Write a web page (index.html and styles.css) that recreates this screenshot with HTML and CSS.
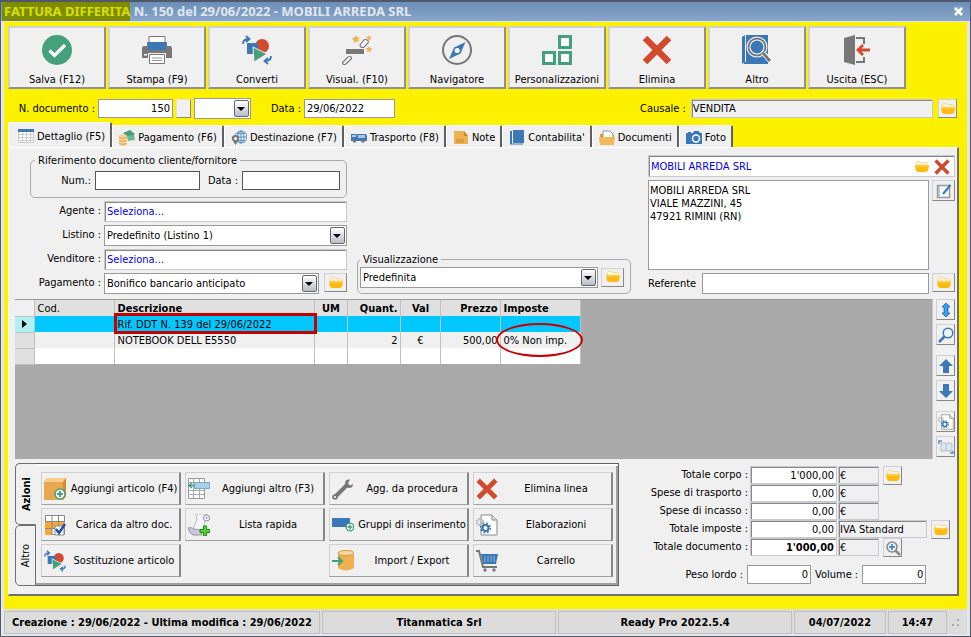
FILE: index.html
```html
<!DOCTYPE html>
<html lang="it">
<head>
    <meta charset="UTF-8">
    <meta name="viewport" content="width=device-width, initial-scale=1.0">
    <title>Fattura differita N. 150</title>
    <link rel="stylesheet" href="styles.css">
</head>
<body>
    <!-- Icone condivise -->
    <svg class="sprite" aria-hidden="true">
        <symbol id="folder" viewBox="0 0 16 14">
            <path d="M2.500 2.500q0-1 1-1H6l1 1h5.500q1 0 1 1V7h-11z" fill="#fff6dc" stroke="#fbd88a" stroke-width="1"/>
            <path d="M1 5h14l-.6 4q-.2 3-3.400 3H5q-3.200 0-3.400-3z" fill="#ffb90f"/>
            <path d="M1 5h14l-.3 2H1.300z" fill="#ffcb3c"/>
        </symbol>
        <symbol id="cross" viewBox="0 0 30 30">
            <path d="M3 3l24 24M27 3L3 27" stroke="#d24a2e" stroke-width="6.500" fill="none"/>
        </symbol>
        <symbol id="convert" viewBox="0 0 30 30">
            <circle cx="20" cy="11" r="7" fill="#d24a2e"/>
            <path d="M5 8h11v11H5z" fill="#3c78b8"/>
            <path d="M11 12l14 7-13 8z" fill="#45a07c" stroke="#f0f0f0" stroke-width="1"/>
            <path d="M1 9q0-5 6-5M4 1l3.500 3L4 7" fill="none" stroke="#3c78b8" stroke-width="1.800"/>
            <path d="M29 21q0 5-6 5M26 23l-3.500 3 3.500 3" fill="none" stroke="#3c78b8" stroke-width="1.800"/>
        </symbol>
        <symbol id="arrow-up" viewBox="0 0 16 16">
            <path d="M8 1l7 7h-4v7H5V8H1z" fill="#3c78b8"/>
        </symbol>
        <symbol id="gear-page" viewBox="0 0 22 22">
            <path d="M5 1h11l5 5v15H5z" fill="#fff" stroke="#888" stroke-width="1"/>
            <path d="M16 1v5h5" fill="#ddd" stroke="#888"/>
            <circle cx="4" cy="8" r="3" fill="none" stroke="#bbb" stroke-width="2.500" stroke-dasharray="1.600 .8"/>
            <circle cx="9.500" cy="14" r="3" fill="none" stroke="#3c78b8" stroke-width="2"/>
            <circle cx="9.500" cy="14" r="4.700" fill="none" stroke="#3c78b8" stroke-width="1.600" stroke-dasharray="1.850 1.850"/>
        </symbol>
    </svg>

    <div class="titlebar">
        <h1><mark>FATTURA DIFFERITA</mark> N. 150 del 29/06/2022 - MOBILI ARREDA SRL</h1>
        <button class="close" type="button" aria-label="Chiudi">
            <svg width="11" height="11" viewBox="0 0 11 11"><path d="M2 2l7 7M9 2l-7 7" stroke="#fff" stroke-width="2.500"/></svg>
        </button>
    </div>

    <form class="document">
        <div class="toolbar">
            <button type="button">
                <svg viewBox="0 0 30 30"><circle cx="15" cy="15" r="15" fill="#45a07c"/><path d="M7.500 15.500l5 5L23 10" fill="none" stroke="#fff" stroke-width="3.200"/></svg>
                Salva (F12)
            </button>
            <button type="button">
                <svg viewBox="0 0 30 30"><path d="M7 1.500h16V8H7z" fill="#fff" stroke="#777"/><path d="M0 13q0-2 2-2h3V7h1v8h18V7h1v4h3q2 0 2 2v10h-6v-5H6v5H0z" fill="#777"/><path d="M6 7h18v8H6z" fill="#3c78b8"/><path d="M2 19h3v1.500H2z" fill="#fff"/><path d="M7.500 19.500h15v9h-15z" fill="#fff" stroke="#777"/><path d="M10 23h10M10 25.500h10" stroke="#999"/></svg>
                Stampa (F9)
            </button>
            <button type="button"><svg><use href="#convert"/></svg>Converti</button>
            <button type="button">
                <svg viewBox="0 0 30 30"><path d="M4 14h18v5H4z" fill="#777"/><path d="M18 10l4-5q1-1 3 0t1 3l-4 4q-2 1-3 0t-1-2zM1 27l5-5q2-1 3 0t0 2l-5 5q-2 1-3 0t0-2z" fill="#fff" stroke="#777" stroke-width="1.200"/><path d="M14 0l1 2.500 3-.3-2 2.300 1.500 2.500-3-.8L12 8l-.2-3L9.500 3.300l3-.8zM27 0l.8 1.700 2 .1-1.400 1.500.5 2.100-1.900-1L25 5.500l.4-2L24 2l2-.3zM27 11l1 2 2.300.2-1.600 1.700.5 2.300-2.200-1.100-2 1.100.4-2.400-1.700-1.600 2.300-.4z" fill="#f0b050"/></svg>
                Visual. (F10)
            </button>
            <button type="button">
                <svg viewBox="0 0 30 30"><circle cx="15" cy="15" r="14" fill="none" stroke="#777" stroke-width="2"/><path d="M23.500 7l-5 11.500L7 24l5-11.500z" fill="#3c78b8"/><circle cx="15.200" cy="15.500" r="2.500" fill="#fff"/></svg>
                Navigatore
            </button>
            <button type="button">
                <svg viewBox="0 0 30 30"><path d="M17.500 1.500h11v11h-11zM1.500 17.500h11v11h-11zM17.500 17.500h11v11h-11z" fill="#fff" stroke="#45a07c" stroke-width="3"/></svg>
                Personalizzazioni
            </button>
            <button type="button"><svg><use href="#cross"/></svg>Elimina</button>
            <button type="button">
                <svg viewBox="0 0 30 30"><path d="M0 2l3-2v27l-3 2zM4 0h22v27H4z" fill="#3c78b8"/><path d="M2 28h24" stroke="#3c78b8" stroke-width="2"/><circle cx="15" cy="12" r="8.500" fill="#3c78b8" stroke="#fff" stroke-width="4"/><circle cx="15" cy="12" r="8.500" fill="none" stroke="#777" stroke-width="2"/><path d="M21 18l7 7.500" stroke="#fff" stroke-width="5"/><path d="M21 18l7 8" stroke="#777" stroke-width="3"/></svg>
                Altro
            </button>
            <button type="button">
                <svg viewBox="0 0 30 30"><path d="M2 3l11-3v30L2 27z" fill="#777"/><path d="M14 3h8v6M14 27h8v-5" fill="none" stroke="#777" stroke-width="2"/><path d="M28 15H16M21 10l-5 5 5 5" fill="none" stroke="#d24a2e" stroke-width="2.800"/></svg>
                Uscita (ESC)
            </button>
        </div>

        <div class="doc-row">
            <label for="numero">N. documento :</label>
            <input class="num w-numero" id="numero" type="text" value="150">
            <button class="blank" type="button" aria-label="Numerazione"></button>
            <span class="combo w-serie"><select aria-label="Serie"><option></option></select></span>
            <label class="lbl-data" for="data">Data :</label>
            <input class="w-data" id="data" type="text" value="29/06/2022">
            <div class="causale">
                <label for="causale">Causale :</label>
                <input class="sunken grey" id="causale" type="text" value="VENDITA" readonly>
                <button class="mini" type="button" aria-label="Scegli causale"><svg><use href="#folder"/></svg></button>
            </div>
        </div>

        <nav class="tabs">
            <button class="tab active" type="button">
                <svg viewBox="0 0 16 14"><path d="M.5.500h15v13H.5z" fill="#fff" stroke="#ccc"/><path d="M0 5.500h16M0 8.500h16M0 11.500h16M4.500 3v11M8.500 3v11M12.500 3v11" stroke="#ccc"/><path d="M0 0h16v3H0z" fill="#3c78b8"/></svg>
                Dettaglio (F5)
            </button>
            <button class="tab" type="button">
                <svg viewBox="0 0 16 16"><path d="M4 3l7-3 5 4-6 4z" fill="#45a07c"/><path d="M8 6l7-1 1 5-7 1z" fill="#6bb898"/><path d="M0 6v8q4 3 8 0V6z" fill="#f0b050"/><ellipse cx="4" cy="6" rx="4" ry="1.500" fill="#f8d090"/><path d="M0 9q4 2 8 0M0 12q4 2 8 0" fill="none" stroke="#fff" stroke-width=".8"/></svg>
                Pagamento (F6)
            </button>
            <button class="tab" type="button">
                <svg viewBox="0 0 16 16"><circle cx="10" cy="7" r="6" fill="#e8f0f8" stroke="#5a8fc4"/><path d="M10 1v12M4 7h12M6 3.500h8M6 10.500h8" stroke="#5a8fc4"/><ellipse cx="10" cy="7" rx="3" ry="6" fill="none" stroke="#5a8fc4"/><path d="M4.500 15L1 9.500Q0 5 4.500 5T8 9.500z" fill="#777"/><circle cx="4.500" cy="8.500" r="1.500" fill="#fff"/></svg>
                Destinazione (F7)
            </button>
            <button class="tab" type="button">
                <svg viewBox="0 0 16 14"><path d="M0 3h5l1 1V3h9l1 2v5H0z" fill="#3c78b8"/><path d="M1 4h4v2H1zM7 4h7v3H7z" fill="#a8c8e8"/><circle cx="3.500" cy="10" r="1.800" fill="#777"/><circle cx="12" cy="10" r="1.800" fill="#777"/></svg>
                Trasporto (F8)
            </button>
            <button class="tab" type="button">
                <svg viewBox="0 0 16 14"><path d="M1 0h10l4 5v8H1z" fill="#f0b050"/><path d="M11 0v5h4z" fill="#c88830"/><path d="M3 9h8M3 11h8" stroke="#c88830"/></svg>
                Note
            </button>
            <button class="tab" type="button">
                <svg viewBox="0 0 16 16"><path d="M1 1h2v13H1zM4 0h11v13H4z" fill="#3c78b8"/><path d="M1 14h13" stroke="#3c78b8"/></svg>
                Contabilita'
            </button>
            <button class="tab" type="button">
                <svg viewBox="0 0 16 14"><path d="M1 3h4l1 1h9v9H1z" fill="#d89a3c"/><path d="M4 0h7l3 3v5H4z" fill="#fff" stroke="#999"/><path d="M0 6h16l-1 8H1z" fill="#f0b858"/></svg>
                Documenti
            </button>
            <button class="tab" type="button">
                <svg viewBox="0 0 16 14"><path d="M0 2h2V1h3v1h2l1-2h5l1 2h2v11H0z" fill="#3c78b8"/><circle cx="10" cy="7.500" r="3.500" fill="#3c78b8" stroke="#fff" stroke-width="1.500"/></svg>
                Foto
            </button>
        </nav>

        <div class="panel">
            <div class="head">
                <div class="left">
                    <fieldset class="riferimento">
                        <legend>Riferimento documento cliente/fornitore</legend>
                        <label for="rifNum">Num.:</label>
                        <input class="dark" id="rifNum" type="text">
                        <label for="rifData">Data :</label>
                        <input class="dark" id="rifData" type="text">
                    </fieldset>
                    <div class="field">
                        <label for="agente">Agente :</label>
                        <input class="sunken link" id="agente" type="text" value="Seleziona...">
                    </div>
                    <div class="field">
                        <label for="listino">Listino :</label>
                        <span class="combo"><select id="listino"><option>Predefinito (Listino 1)</option></select></span>
                    </div>
                    <div class="field">
                        <label for="venditore">Venditore :</label>
                        <input class="sunken link" id="venditore" type="text" value="Seleziona...">
                    </div>
                    <div class="field">
                        <label for="pagamento">Pagamento :</label>
                        <span class="combo"><select id="pagamento"><option>Bonifico bancario anticipato</option></select></span>
                        <button class="mini wide" type="button" aria-label="Scegli pagamento"><svg><use href="#folder"/></svg></button>
                    </div>
                </div>

                <fieldset class="visualizzazione">
                    <legend>Visualizzazione</legend>
                    <span class="combo"><select aria-label="Visualizzazione"><option>Predefinita</option></select></span>
                    <button class="mini wide" type="button" aria-label="Modifica visualizzazione"><svg><use href="#folder"/></svg></button>
                </fieldset>

                <div class="cliente">
                    <div class="lookup sunken">
                        <input class="link" aria-label="Cliente" type="text" value="MOBILI ARREDA SRL">
                        <button type="button" aria-label="Scegli cliente"><svg><use href="#folder"/></svg></button>
                        <button type="button" aria-label="Rimuovi cliente"><svg><use href="#cross"/></svg></button>
                    </div>
                    <div class="indirizzo">
                        <textarea aria-label="Indirizzo">MOBILI ARREDA SRL
VIALE MAZZINI, 45
47921 RIMINI (RN)</textarea>
                        <button class="mini wide" type="button" aria-label="Modifica indirizzo">
                            <svg viewBox="0 0 16 16"><path d="M1.500 2.500h12v12h-12z" fill="#f4f8fc" stroke="#999" stroke-width="1.500"/><path d="M3 2v13" stroke="#999"/><path d="M14.500 2L7 11" stroke="#3c78b8" stroke-width="2"/></svg>
                        </button>
                    </div>
                    <div class="referente">
                        <label for="referente">Referente</label>
                        <input id="referente" type="text">
                        <button class="mini wide" type="button" aria-label="Scegli referente"><svg><use href="#folder"/></svg></button>
                    </div>
                </div>
            </div>

            <div class="body">
                <div class="grid">
                    <table>
                        <thead>
                            <tr>
                                <th class="c-mark"></th>
                                <th class="c-cod">Cod.</th>
                                <th class="c-desc">Descrizione</th>
                                <th class="c-um">UM</th>
                                <th class="c-quant">Quant.</th>
                                <th class="c-val">Val</th>
                                <th class="c-prezzo">Prezzo</th>
                                <th class="c-imposte">Imposte</th>
                            </tr>
                        </thead>
                        <tbody>
                            <tr class="selected">
                                <td class="c-mark"><svg width="5" height="8" viewBox="0 0 5 8"><path d="M0 0l5 4-5 4z"/></svg></td>
                                <td></td>
                                <td class="boxed">Rif. DDT N. 139 del 29/06/2022</td>
                                <td></td><td></td><td></td><td></td><td></td>
                            </tr>
                            <tr class="even">
                                <td class="c-mark"></td>
                                <td></td>
                                <td>NOTEBOOK DELL E5550</td>
                                <td></td>
                                <td class="c-quant">2</td>
                                <td class="c-val">€</td>
                                <td class="c-prezzo">500,00</td>
                                <td class="circled">0% Non imp.</td>
                            </tr>
                            <tr>
                                <td class="c-mark"></td>
                                <td></td><td></td><td></td><td></td><td></td><td></td><td></td>
                            </tr>
                        </tbody>
                    </table>
                </div>
                <div class="side">
                    <button class="mini" type="button" aria-label="Altezza righe"><svg viewBox="0 0 16 16"><path d="M8 1l4 4h-2v6h2l-4 4-4-4h2V5H4z" fill="#3a9cf0" stroke="#1560b0" stroke-width=".8"/></svg></button>
                    <button class="mini" type="button" aria-label="Cerca"><svg viewBox="0 0 16 16"><circle cx="10" cy="6" r="4.800" fill="#eef5fb" stroke="#3c78b8" stroke-width="1.500"/><path d="M6.500 9.500L1 15" stroke="#3c78b8" stroke-width="2.500"/></svg></button>
                    <button class="mini group" type="button" aria-label="Sposta su"><svg><use href="#arrow-up"/></svg></button>
                    <button class="mini down" type="button" aria-label="Sposta giù"><svg><use href="#arrow-up"/></svg></button>
                    <button class="mini group" type="button" aria-label="Elabora riga"><svg><use href="#gear-page"/></svg></button>
                    <button class="mini" type="button" aria-label="Confronta"><svg viewBox="0 0 16 16"><path d="M3 4h4l1 1 1-1h4l1 1v7H8.500L8 11l-.5 1H3z" fill="#d5eaf6" stroke="#bbb"/><path d="M8 5v7" stroke="#bbb"/><path d="M1 5V2h3M15 12v2h-3" fill="none" stroke="#5a8fc4" stroke-width="1.500"/></svg></button>
                </div>
            </div>

            <div class="foot">
                <div class="actions">
                    <div class="vtabs">
                        <button class="vtab active" type="button"><span>Azioni</span></button>
                        <button class="vtab" type="button"><span>Altro</span></button>
                    </div>
                    <div class="action-grid">
                        <button type="button">
                            <svg viewBox="0 0 22 22"><path d="M0 4l3-4h19v18l-3 4H0z" fill="#e8a850"/><path d="M0 4l3-4h19l-3 4z" fill="#f6cc88"/><path d="M19 4l3-4v18l-3 4z" fill="#d08c30"/><circle cx="16" cy="16" r="5" fill="#fff" stroke="#45a07c" stroke-width="1.500"/><path d="M16 13v6M13 16h6" stroke="#45a07c" stroke-width="2"/></svg>
                            <span>Aggiungi articolo (F4)</span>
                        </button>
                        <button type="button">
                            <svg viewBox="0 0 22 22"><path d="M.5.500h16v20H.5z" fill="#fff" stroke="#999"/><path d="M0 4.500h16M0 12.500h16M0 16.500h16M5.500 0v20M11.500 0v20" stroke="#aaa"/><path d="M6.500 4.500h15v6h-15z" fill="#a8d0e8" stroke="#7aa8c8"/><path d="M6 7.500H2M4 5L1 7.500 4 10" fill="none" stroke="#45a07c" stroke-width="1.500"/></svg>
                            <span>Aggiungi altro (F3)</span>
                        </button>
                        <button type="button">
                            <svg viewBox="0 0 22 22"><path d="M3 19L15 7" stroke="#777" stroke-width="4"/><path d="M18 1.500q-5-.5-5 4 0 4 4 4.500 4 0 4-4l-3 1.500-2-2z" fill="#777"/><circle cx="3" cy="19" r="2.800" fill="#777"/><circle cx="3" cy="19" r="1" fill="#fff"/></svg>
                            <span>Agg. da procedura</span>
                        </button>
                        <button type="button"><svg><use href="#cross"/></svg><span>Elimina linea</span></button>
                        <button type="button">
                            <svg viewBox="0 0 22 22"><path d="M1.500 1.500h19v19h-19z" fill="#fff" stroke="#888"/><path d="M1 8h20v6H1zM1 14h7v7H1z" fill="#f4a838"/><path d="M1 7.500h20M1 14.500h20M8 1v20M14.500 1v20" stroke="#888"/><path d="M11 12h9v9h-9z" fill="#fff" stroke="#888"/><path d="M12 15l3 4 6-9" fill="none" stroke="#2050b0" stroke-width="2.500"/></svg>
                            <span>Carica da altro doc.</span>
                        </button>
                        <button type="button">
                            <svg viewBox="0 0 22 22"><path d="M7 0h11q4 1 2 7l-3-1-2 12H4l4-10q2-6-1-8z" fill="#f4f4fb" stroke="#bbb"/><path d="M0 14q4-1 6 1l6 1 2 5H5q-4-2-5-7z" fill="#c8c8e0" stroke="#999"/><circle cx="18.500" cy="4" r="3" fill="#fff" stroke="#8888b0"/><circle cx="18.500" cy="4" r="1" fill="#8888b0"/><path d="M15.500 12h3v3.500H22v3h-3.500V22h-3v-3.500H12v-3h3.500z" fill="#50d830" stroke="#188818"/></svg>
                            <span>Lista rapida</span>
                        </button>
                        <button type="button">
                            <svg viewBox="0 0 22 22"><path d="M0 4h18v9H0z" fill="#3c78b8"/><circle cx="18" cy="13" r="3.800" fill="#fff" stroke="#45a07c" stroke-width="1.300"/><path d="M18 10.500v5M15.500 13h5" stroke="#45a07c" stroke-width="1.500"/></svg>
                            <span>Gruppi di inserimento</span>
                        </button>
                        <button type="button"><svg><use href="#gear-page"/></svg><span>Elaborazioni</span></button>
                        <button type="button"><svg><use href="#convert"/></svg><span>Sostituzione articolo</span></button>
                        <button class="third" type="button">
                            <svg viewBox="0 0 22 22"><path d="M6 3v15q8 5 16 0V3z" fill="#f0b050"/><ellipse cx="14" cy="3" rx="8" ry="2.500" fill="#f8d8a0" stroke="#d89a3c"/><path d="M0 11h9M6 7l4 4-4 4" fill="none" stroke="#45a07c" stroke-width="2"/></svg>
                            <span>Import / Export</span>
                        </button>
                        <button type="button">
                            <svg viewBox="0 0 22 22"><path d="M5 4h17l-2 10H7z" fill="#3c78b8"/><path d="M9 6v6M12 6v6M15 6v6M18 6v6" stroke="#8ab4dc"/><path d="M0 1h3l4 16h14" fill="none" stroke="#777" stroke-width="2"/><circle cx="9" cy="20" r="1.700" fill="#777"/><circle cx="18" cy="20" r="1.700" fill="#777"/></svg>
                            <span>Carrello</span>
                        </button>
                    </div>
                </div>

                <div class="totals">
                    <div class="total">
                        <label for="corpo">Totale corpo :</label>
                        <input class="sunken num" id="corpo" type="text" value="1'000,00">
                        <input class="sunken grey unit" aria-label="Valuta corpo" type="text" value="€" readonly>
                        <button class="mini" type="button" aria-label="Dettaglio corpo"><svg><use href="#folder"/></svg></button>
                    </div>
                    <div class="total">
                        <label for="trasporto">Spese di trasporto :</label>
                        <input class="sunken num" id="trasporto" type="text" value="0,00">
                        <input class="sunken grey unit" aria-label="Valuta trasporto" type="text" value="€" readonly>
                    </div>
                    <div class="total">
                        <label for="incasso">Spese di incasso :</label>
                        <input class="sunken num" id="incasso" type="text" value="0,00">
                        <input class="sunken grey unit" aria-label="Valuta incasso" type="text" value="€" readonly>
                    </div>
                    <div class="total">
                        <label for="imposte">Totale imposte :</label>
                        <input class="sunken num" id="imposte" type="text" value="0,00">
                        <input class="sunken grey iva" aria-label="Tipo IVA" type="text" value="IVA Standard" readonly>
                        <button class="mini" type="button" aria-label="Scegli IVA"><svg><use href="#folder"/></svg></button>
                    </div>
                    <div class="total">
                        <label for="totale">Totale documento :</label>
                        <input class="sunken num strong" id="totale" type="text" value="1'000,00">
                        <input class="sunken grey unit" aria-label="Valuta totale" type="text" value="€" readonly>
                        <button class="mini" type="button" aria-label="Dettaglio totale"><svg viewBox="0 0 16 16"><circle cx="7" cy="7" r="5" fill="#e4f0fa" stroke="#888" stroke-width="1.500"/><path d="M7 4v6M4 7h6" stroke="#3c78b8" stroke-width="1.500"/><path d="M10.500 10.500L15 15" stroke="#888" stroke-width="2.500"/></svg></button>
                    </div>
                    <div class="weights">
                        <label for="peso">Peso lordo :</label>
                        <input class="num" id="peso" type="text" value="0">
                        <label for="volume">Volume :</label>
                        <input class="num" id="volume" type="text" value="0">
                    </div>
                </div>
            </div>
        </div>
    </form>

    <footer class="statusbar">
        <span class="s-date">Creazione : 29/06/2022 - Ultima modifica : 29/06/2022</span>
        <span class="s-wide">Titanmatica Srl</span>
        <span class="s-wide">Ready Pro 2022.5.4</span>
        <span class="s-day">04/07/2022</span>
        <span class="s-time">14:47</span>
        <svg class="grip" width="8" height="8" viewBox="0 0 8 8"><path d="M5 0h2v2H5zM5 5h2v2H5zM0 5h2v2H0z" fill="#aaa"/></svg>
    </footer>
</body>
</html>
```
FILE: styles.css
```css
* {
    box-sizing: border-box;
}

body {
    display: flex;
    flex-direction: column;
    min-height: 100vh;
    margin: 0;
    padding: 0 3px 2px;
    border: 1px solid #50586a;
    border-top-width: 2px;
    background-color: #e4e6ea;
    font-family: "DejaVu Sans Condensed", Tahoma, "DejaVu Sans", sans-serif;
    font-size: 11px;
    line-height: 13px;
    color: #000;
}

input, select, button, textarea {
    font: inherit;
    color: inherit;
    margin: 0;
    border-radius: 0;
}

input, select, textarea {
    min-width: 0;
    border: 1px solid #999;
    background-color: #fff;
    padding: 0 2px;
}

input {
    height: 21px;
}

button {
    background-color: #f0f0f0;
    padding: 0;
}

label {
    text-align: right;
    white-space: nowrap;
}

.sprite {
    display: none;
}

.num {
    text-align: right;
}

.strong {
    font-weight: bold;
}

.link {
    color: #0000f0;
}

.sunken {
    border-color: #c8c8d0;
    box-shadow: inset 1px 1px #888;
}

.grey {
    background-color: #f0f0f0;
    padding: 0 1px;
}

.dark {
    border-color: #555;
}

/* Barra del titolo */
.titlebar {
    display: flex;
    justify-content: space-between;
    align-items: center;
    height: 19px;
    margin: 0 -3px;
    padding: 0 6px 0 1px;
    background: linear-gradient(#6b8fb8, #88a6ca);
}

.titlebar h1 {
    margin: 0;
    font-family: "Noto Sans", Tahoma, sans-serif;
    font-size: 13px;
    line-height: 19px;
    color: #e2e6ee;
}

.titlebar mark {
    display: inline-block;
    padding-left: 2px;
    background-color: #7f8c00;
    color: #d8e000;
}

.close {
    display: flex;
    border: 0;
    background-color: #7f9fbf;
}

.document {
    flex: 1;
    display: flex;
    flex-direction: column;
    margin-top: 1px;
    padding: 4px 8px 13px 4px;
    background-color: #fcf200;
}

.toolbar {
    display: flex;
    gap: 2px;
}

.toolbar button {
    display: flex;
    flex-direction: column;
    align-items: center;
    gap: 8px;
    width: 98px;
    height: 63px;
    padding-top: 7px;
    border: 2px solid;
    border-color: #d0d0d0 #909090 #909090 #d0d0d0;
}

.toolbar svg {
    width: 30px;
    height: 30px;
}

/* Pulsanti piccoli */
.mini {
    flex: none;
    display: flex;
    align-items: center;
    justify-content: center;
    width: 19px;
    height: 19px;
    border: 1px solid;
    border-color: #d0d0d8 #888 #888 #d0d0d8;
}

.mini.wide {
    width: 23px;
}

.mini svg {
    width: 16px;
    height: 16px;
}

/* Caselle a discesa */
.combo {
    position: relative;
    flex: 1;
    display: flex;
    height: 21px;
}

.combo select {
    flex: 1;
    appearance: none;
    padding-right: 20px;
}

.combo::after {
    content: "";
    position: absolute;
    top: 2px;
    right: 2px;
    width: 15px;
    height: 17px;
    box-sizing: border-box;
    border: 1px solid #666;
    border-radius: 2px;
    background: linear-gradient(#fff, #b8bcc8);
    pointer-events: none;
}

.combo::before {
    content: "";
    position: absolute;
    top: 9px;
    right: 6px;
    z-index: 1;
    border: 4px solid transparent;
    border-top-color: #000;
    border-bottom: 0;
    pointer-events: none;
}

.doc-row {
    display: flex;
    align-items: center;
    gap: 3px;
    margin-top: 9px;
    height: 21px;
}

.doc-row > label:first-child {
    width: 87px;
}

.doc-row input {
    height: 19px;
}

.w-numero {
    width: 75px;
}

.blank {
    width: 15px;
    height: 19px;
    border: 1px solid;
    border-color: #e0e0e0 #888 #888 #e0e0e0;
}

.doc-row .w-serie {
    flex: none;
    width: 57px;
}

.doc-row .lbl-data {
    width: 47px;
}

.w-data {
    width: 91px;
}

.causale {
    flex: 1;
    display: flex;
    align-items: center;
    gap: 5px;
    margin: 0 2px 0 242px;
}

.causale input {
    flex: 1;
}

/* Schede */
.tabs {
    display: flex;
    align-items: flex-end;
    height: 28px;
}

.tab {
    display: flex;
    align-items: center;
    gap: 3px;
    height: 22px;
    padding: 2px 5px 0 6px;
    border: 1px solid;
    border-color: #fff #606060 #f0f0f0 #fff;
    border-bottom: 0;
    border-right-width: 2px;
    border-radius: 2px 2px 0 0;
    white-space: nowrap;
}

.tab.active {
    height: 25px;
    padding-left: 9px;
}

.tab svg {
    width: 16px;
    height: 16px;
}

.panel {
    flex: 1;
    display: flex;
    flex-direction: column;
    padding: 6px 2px 8px 6px;
    border: 1px solid;
    border-color: #fff #707070 #707070 #fff;
    border-right-width: 2px;
    border-bottom-width: 2px;
    background-color: #f0f0f0;
}

.head {
    display: flex;
    height: 145px;
}

fieldset {
    display: flex;
    align-items: center;
    min-width: 0;
    margin: 0;
    border: 1px solid #aaa;
    border-radius: 5px;
}

legend {
    padding: 0 3px;
}

.left {
    width: 332px;
    display: flex;
    flex-direction: column;
    gap: 3px;
}

.riferimento {
    gap: 4px;
    height: 44px;
    margin-left: 15px;
    padding: 4px 6px 3px 4px;
}

.riferimento label {
    width: 56px;
}

.riferimento label + input {
    width: 105px;
    height: 19px;
}

.riferimento input + label {
    width: 34px;
}

.riferimento label:nth-of-type(2) + input {
    flex: 1;
}

.field {
    display: flex;
    gap: 3px;
}

.field label {
    width: 86px;
    line-height: 20px;
}

.field > input {
    flex: 1;
}

.field .mini {
    margin-left: 2px;
}

.visualizzazione {
    align-self: flex-end;
    gap: 3px;
    width: 274px;
    height: 41px;
    margin: 0 0 5px 10px;
    padding: 0 6px 5px 2px;
}

.cliente {
    flex: 1;
    display: flex;
    flex-direction: column;
    gap: 3px;
    margin: 1px 0 0 17px;
}

.lookup {
    display: flex;
    align-items: center;
    gap: 4px;
    height: 22px;
    padding: 1px 4px 0 1px;
    border-style: solid;
    border-width: 1px;
    background-color: #fff;
}

.lookup input {
    flex: 1;
    height: 18px;
    border: 0;
    padding: 0 1px;
}

.lookup button {
    display: flex;
    border: 0;
    background: none;
}

.lookup svg {
    width: 16px;
    height: 16px;
}

.indirizzo {
    display: flex;
    gap: 3px;
    height: 90px;
}

.indirizzo textarea {
    flex: 1;
    resize: none;
    padding: 3px 1px;
}

.indirizzo .mini {
    height: 21px;
}

.referente {
    display: flex;
    gap: 3px;
}

.referente label {
    width: 51px;
    line-height: 21px;
    text-align: left;
}

.referente input {
    flex: 1;
}

/* Griglia righe documento */
.body {
    flex: 1;
    display: flex;
    gap: 3px;
}

.grid {
    flex: 1;
    background-color: #aaa;
    border-top: 1px solid #999;
    border-right: 1px solid #c8c8c8;
}

.side {
    display: flex;
    flex-direction: column;
    gap: 4px;
}

.side .mini {
    height: 21px;
}

.side .group {
    margin-top: 6px;
}

.side .down svg {
    transform: rotate(180deg);
}

table {
    table-layout: fixed;
    width: 566px;
    border-collapse: collapse;
}

th, td {
    height: 16px;
    padding: 0 2px 0 3px;
    line-height: 15px;
    border-right: 1px solid #c0c0c0;
    background-color: #fff;
    text-align: left;
    white-space: nowrap;
}

th {
    background-color: #e0e0e0;
}

.c-mark {
    width: 19px;
    background-color: #e0e0e0;
    border-bottom: 1px solid #c0c0c0;
    text-align: center;
}

th.c-mark {
    background-color: #f0f0f0;
}

.c-cod {
    width: 80px;
    font-weight: normal;
}

.c-desc {
    width: 200px;
}

.c-um {
    width: 33px;
    text-align: center;
}

.c-quant {
    width: 53px;
    text-align: right;
}

.c-val {
    width: 40px;
    text-align: center;
}

.c-prezzo {
    width: 60px;
    text-align: right;
}

.even td:not(.c-mark) {
    background-color: #f0f0f0;
}

.selected td {
    background-color: #00c8ff;
}

.selected .c-mark {
    background-color: #b0f0f0;
}

.c-mark svg {
    display: block;
    margin: 0 auto;
}

.boxed, .circled {
    position: relative;
}

/* Evidenziazioni in rosso */
.boxed::after {
    content: "";
    position: absolute;
    inset: -3px -3px -2px -1px;
    border: 3px solid #c80000;
}

.circled::after {
    content: "";
    position: absolute;
    inset: -9px -3px -9px -5px;
    border: 2px solid #c80000;
    border-radius: 50%;
}

.foot {
    display: flex;
    justify-content: space-between;
    margin-top: 4px;
}

.actions {
    display: flex;
}

.vtabs {
    display: flex;
    flex-direction: column;
    width: 21px;
}

.vtab {
    flex: 1;
    display: flex;
    align-items: center;
    justify-content: center;
    border: 1px solid #707070;
    border-radius: 5px 0 0 5px;
}

.vtab.active {
    border-right: 0;
    font-weight: bold;
}

.vtab span {
    writing-mode: vertical-rl;
    transform: rotate(180deg);
}

.action-grid {
    display: grid;
    grid-template-columns: repeat(4, 140px);
    grid-auto-rows: 33px;
    gap: 3px 4px;
    padding: 8px 5px 8px 5px;
    border: 1px solid #606060;
    border-left: 0;
    box-shadow: inset 0 2px #fff, inset -2px -2px #a0a0a0;
}

.action-grid button {
    display: flex;
    align-items: center;
    gap: 4px;
    padding: 0 1px 0 2px;
    border: 1px solid;
    border-color: #d0d0d0 #888 #a0a0a0 #d0d0d0;
    border-right-width: 2px;
}

.action-grid svg {
    flex: none;
    width: 22px;
    height: 22px;
}

.action-grid span {
    flex: 1;
    white-space: nowrap;
}

.action-grid .third {
    grid-column: 3;
}

.totals {
    width: 310px;
    padding-top: 3px;
}

.total {
    display: flex;
    gap: 1px;
    height: 18px;
}

.total label {
    width: 103px;
    line-height: 18px;
}

.total input {
    width: 87px;
    height: 18px;
}

.total label + input {
    margin-left: 1px;
}

.total .unit {
    width: 41px;
}

.total .iva {
    width: 89px;
}

.total .mini {
    margin-left: 3px;
}

.weights {
    display: flex;
    align-items: center;
    gap: 4px;
    margin-top: 9px;
}

.weights label:first-child {
    width: 98px;
}

.weights input {
    width: 64px;
    height: 19px;
}

/* Barra di stato */
.statusbar {
    display: flex;
    align-items: center;
    gap: 2px;
    padding-top: 2px;
    background-color: #dcdcdc;
    font-weight: bold;
}

.statusbar span {
    height: 23px;
    line-height: 22px;
    padding: 0 3px;
    border: 1px solid #c0c0c0;
    text-align: center;
    white-space: nowrap;
}

.s-date {
    width: 316px;
}

.s-wide {
    flex: 1;
}

.s-day {
    width: 92px;
}

.s-time {
    width: 59px;
}

.grip {
    margin: 0 7px 0 3px;
}
```
